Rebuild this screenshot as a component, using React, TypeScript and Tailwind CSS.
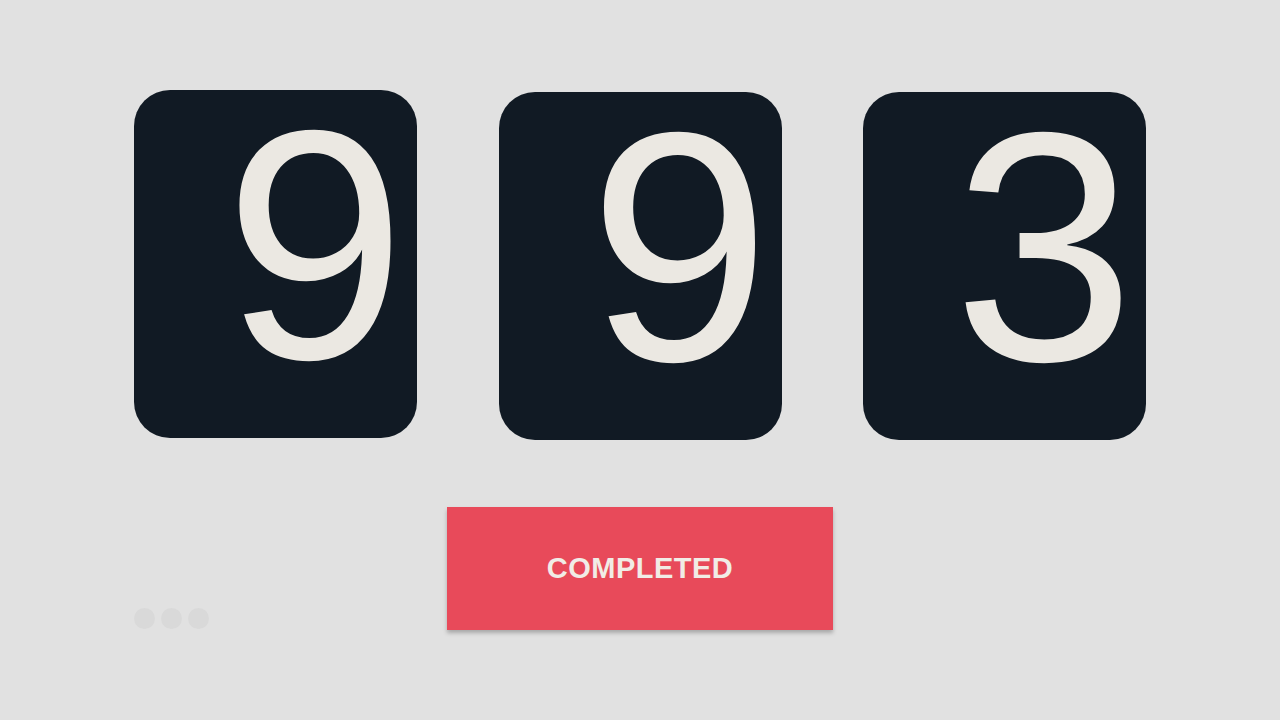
// Counter display: three rounded digit tiles with a status button below.

const digits = ['9', '9', '3'];

function DigitTile({ value, offset }: { value: string; offset?: boolean }) {
  return (
    <div
      className={`flex h-[348px] w-[283px] justify-end rounded-[36px] bg-[#111a24] pr-[11px] ${
        offset ? 'mt-[2px]' : ''
      }`}
    >
      <span className="font-['Liberation_Sans',sans-serif] text-[327px] leading-[310px] text-[#ebe8e2]">
        {value}
      </span>
    </div>
  );
}

export default function App() {
  return (
    <div className="flex min-h-[720px] w-full justify-center bg-[#e1e1e1] pt-[90px]">
      <div className="flex w-[1012px] flex-col">
        <div className="flex items-start justify-between">
          {digits.map((d, i) => (
            <DigitTile key={i} value={d} offset={i > 0} />
          ))}
        </div>

        <div className="mt-[67px] grid grid-cols-[1fr_386px_1fr] items-end">
          {/* Loading dots */}
          <div className="flex gap-[6px] pb-[1px]">
            <span className="h-[21px] w-[21px] rounded-full bg-[#d9d9d9]" />
            <span className="h-[21px] w-[21px] rounded-full bg-[#d9d9d9]" />
            <span className="h-[21px] w-[21px] rounded-full bg-[#d9d9d9]" />
          </div>

          <button className="flex h-[123px] items-center justify-center bg-[#e84a5a] shadow-[0_3px_4px_rgba(0,0,0,0.25)]">
            <span className="font-['Liberation_Sans',sans-serif] text-[29px] font-bold tracking-[0.5px] text-[#f1ece6]">
              COMPLETED
            </span>
          </button>

          <div />
        </div>
      </div>
    </div>
  );
}
